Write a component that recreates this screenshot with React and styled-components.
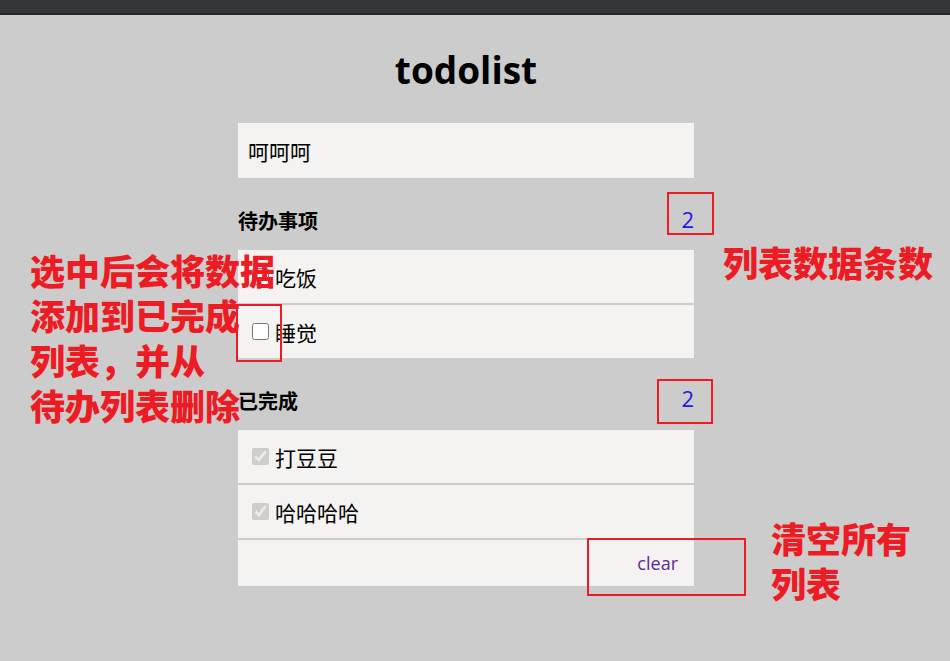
import React from "react";
import styled, { createGlobalStyle } from "styled-components";

const GlobalStyle = createGlobalStyle`
  html, body {
    margin: 0;
    padding: 0;
    background-color: #cccccc;
  }
  body {
    font-family: "Noto Sans CJK SC", "Noto Sans", sans-serif;
    color: #000;
  }
`;

const Page = styled.div`
  position: relative;
  width: 950px;
  height: 661px;
  overflow: hidden;
  background-color: #cccccc;
`;

const TopBar = styled.div`
  height: 13px;
  background-color: #35363a;
  border-bottom: 2px solid #242427;
`;

const Main = styled.div`
  width: 456px;
  margin-left: 238px;
`;

const Title = styled.h1`
  margin: 30px 0 28px;
  height: 50px;
  line-height: 50px;
  text-align: center;
  font-family: "Open Sans", "Noto Sans", sans-serif;
  font-size: 37px;
  font-weight: 700;
`;

const TodoInput = styled.input.attrs(() => ({
  type: "text",
  defaultValue: "呵呵呵",
}))`
  display: block;
  width: 100%;
  height: 55px;
  box-sizing: border-box;
  padding: 0 10px;
  border: 0;
  outline: 0;
  background-color: #f4f3f1;
  font-family: "Noto Sans CJK SC", sans-serif;
  font-size: 21px;
  color: #000;
`;

const SectionHead = styled.div`
  display: flex;
  align-items: center;
  justify-content: space-between;
  height: 40px;
  margin: 22px 0 10px;

  h2 {
    margin: 0;
    font-size: 20px;
    font-weight: 700;
  }
`;

const Count = styled.span`
  color: #1a1aee;
  font-family: "Open Sans", "Noto Sans", sans-serif;
  font-size: 22px;
  margin-top: ${(p) => p.$shift || 0}px;
`;

const List = styled.ul`
  list-style: none;
  margin: 0;
  padding: 0;
`;

const Item = styled.li`
  display: flex;
  align-items: center;
  height: 53px;
  margin-bottom: 2px;
  padding-left: 14px;
  background-color: #f4f3f1;
  font-size: 21px;

  input {
    width: 17px;
    height: 17px;
    margin: 0 6px 0 0;
  }
`;

const Footer = styled.div`
  display: flex;
  align-items: center;
  justify-content: flex-end;
  height: 46px;
  padding-right: 16px;
  background-color: #f4f3f1;
`;

const ClearLink = styled.a`
  color: #5b2a8f;
  font-family: "Open Sans", "Noto Sans", sans-serif;
  font-size: 18px;
  text-decoration: none;
  cursor: pointer;
`;

const Note = styled.div`
  position: absolute;
  left: ${(p) => p.$x}px;
  top: ${(p) => p.$y}px;
  color: #ed1c24;
  font-family: "Noto Sans CJK SC", sans-serif;
  font-size: 35px;
  font-weight: 900;
  line-height: 45px;
  white-space: nowrap;
`;

const Mark = styled.div`
  position: absolute;
  left: ${(p) => p.$x}px;
  top: ${(p) => p.$y}px;
  width: ${(p) => p.$w}px;
  height: ${(p) => p.$h}px;
  box-sizing: border-box;
  border: 2px solid #ed1c24;
  pointer-events: none;
`;

const todos = ["吃饭", "睡觉"];
const done = ["打豆豆", "哈哈哈哈"];

const App = () => {
  return (
    <Page>
      <GlobalStyle />
      <TopBar />
      <Main>
        <Title>todolist</Title>
        <TodoInput />

        <SectionHead>
          <h2>待办事项</h2>
          <Count $shift={-2}>{todos.length}</Count>
        </SectionHead>
        <List>
          {todos.map((t) => (
            <Item key={t}>
              <input type="checkbox" />
              {t}
            </Item>
          ))}
        </List>

        <SectionHead>
          <h2>已完成</h2>
          <Count $shift={-4}>{done.length}</Count>
        </SectionHead>
        <List>
          {done.map((t) => (
            <Item key={t}>
              <input type="checkbox" checked disabled readOnly />
              {t}
            </Item>
          ))}
        </List>
        <Footer>
          <ClearLink>clear</ClearLink>
        </Footer>
      </Main>

      <Mark $x={667} $y={192} $w={47} $h={43} />
      <Mark $x={236} $y={304} $w={46} $h={58} />
      <Mark $x={657} $y={379} $w={56} $h={45} />
      <Mark $x={587} $y={538} $w={159} $h={58} />

      <Note $x={30} $y={247}>
        选中后会将数据
        <br />
        添加到已完成
        <br />
        列表，并从
        <br />
        待办列表删除
      </Note>
      <Note $x={723} $y={239}>列表数据条数</Note>
      <Note $x={771} $y={515}>
        清空所有
        <br />
        列表
      </Note>
    </Page>
  );
};

export default App;
